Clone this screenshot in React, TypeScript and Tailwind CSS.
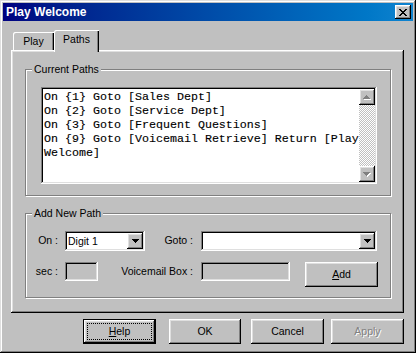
import React from 'react';

const sans = { fontFamily: '"Liberation Sans", Arial, sans-serif' };
const mono = { fontFamily: '"Liberation Mono", "Courier New", monospace' };

// classic 3d bevels
const RAISED =
  'shadow-[inset_-1px_-1px_#000,inset_1px_1px_#fff,inset_-2px_-2px_#808080,inset_2px_2px_#dfdfdf]';
const WINDOW =
  'shadow-[inset_-1px_-1px_#000,inset_1px_1px_#dfdfdf,inset_-2px_-2px_#808080,inset_2px_2px_#fff]';
const SUNKEN =
  'shadow-[inset_-1px_-1px_#fff,inset_1px_1px_#808080,inset_-2px_-2px_#dfdfdf,inset_2px_2px_#000]';
const FOCUSED =
  'shadow-[inset_-1px_-1px_#000,inset_1px_1px_#000,inset_-2px_-2px_#000,inset_2px_2px_#fff,inset_-3px_-3px_#808080,inset_3px_3px_#dfdfdf]';
const ETCHED = 'border border-[#808080] shadow-[1px_1px_#fff,inset_1px_1px_#fff]';
const TAB = 'shadow-[inset_1px_1px_#fff,inset_-1px_0_#000,inset_-2px_0_#808080]';

function CloseGlyph() {
  const rows = ['11000011', '01100110', '00111100', '00011000', '00111100', '01100110', '11000011'];
  return (
    <svg width="8" height="7" viewBox="0 0 8 7" shapeRendering="crispEdges">
      {rows.map((r, y) =>
        r.split('').map((c, x) => (c === '1' ? <rect key={`${x}-${y}`} x={x} y={y} width="1" height="1" fill="#000" /> : null))
      )}
    </svg>
  );
}

function DownArrow({ color = '#000' }: { color?: string }) {
  return (
    <svg width="7" height="4" viewBox="0 0 7 4" shapeRendering="crispEdges">
      <rect x="0" y="0" width="7" height="1" fill={color} />
      <rect x="1" y="1" width="5" height="1" fill={color} />
      <rect x="2" y="2" width="3" height="1" fill={color} />
      <rect x="3" y="3" width="1" height="1" fill={color} />
    </svg>
  );
}

function DisabledArrow({ up }: { up?: boolean }) {
  const tri = (dx: number, dy: number, fill: string) =>
    up ? (
      <g fill={fill}>
        <rect x={3 + dx} y={0 + dy} width="1" height="1" />
        <rect x={2 + dx} y={1 + dy} width="3" height="1" />
        <rect x={1 + dx} y={2 + dy} width="5" height="1" />
        <rect x={0 + dx} y={3 + dy} width="7" height="1" />
      </g>
    ) : (
      <g fill={fill}>
        <rect x={0 + dx} y={0 + dy} width="7" height="1" />
        <rect x={1 + dx} y={1 + dy} width="5" height="1" />
        <rect x={2 + dx} y={2 + dy} width="3" height="1" />
        <rect x={3 + dx} y={3 + dy} width="1" height="1" />
      </g>
    );
  return (
    <svg width="8" height="5" viewBox="0 0 8 5" shapeRendering="crispEdges">
      {tri(1, 1, '#fff')}
      {tri(0, 0, '#808080')}
    </svg>
  );
}

function Combo({ width, value }: { width: string; value?: string }) {
  return (
    <div className={`${width} h-[20px] bg-white ${SUNKEN} p-[2px] flex`}>
      <div className="flex-1 pl-[1px] flex items-center text-black leading-none">{value}</div>
      <div className={`w-[16px] h-[16px] bg-[#c0c0c0] ${RAISED} flex items-center justify-center`}>
        <DownArrow />
      </div>
    </div>
  );
}

function Group({ label, height, className = '', children }: { label: string; height: string; className?: string; children: React.ReactNode }) {
  return (
    <div className={`relative w-[366px] ${height} ${ETCHED} ${className}`}>
      <span className="absolute left-[6px] top-[-7px] px-[2px] bg-[#c0c0c0] leading-[13px] text-black">{label}</span>
      {children}
    </div>
  );
}

function Button({ w, children, focused, disabled, className = '' }: { w: string; children: React.ReactNode; focused?: boolean; disabled?: boolean; className?: string }) {
  return (
    <div
      className={`relative ${w} h-[25px] bg-[#c0c0c0] ${focused ? FOCUSED : RAISED} flex items-center justify-center ${
        disabled ? 'text-[#808080] [text-shadow:1px_1px_0_#fff]' : 'text-black'
      } ${className}`}
    >
      {focused && <div className="absolute inset-[4px] border border-dotted border-black" />}
      <span className="relative">{children}</span>
    </div>
  );
}

const lines = [
  'On {1} Goto [Sales Dept]',
  'On {2} Goto [Service Dept]',
  'On {3} Goto [Frequent Questions]',
  'On {9} Goto [Voicemail Retrieve] Return [Play',
  'Welcome]',
];

export default function App() {
  return (
    <div className={`w-[416px] h-[353px] bg-[#c0c0c0] ${WINDOW} p-[3px] flex flex-col text-[10.5px]`} style={sans}>
      {/* Title bar */}
      <div className="h-[18px] flex items-center justify-between pl-[3px] pr-[2px] bg-linear-to-r from-[#000080] to-[#1084d0]">
        <span className="text-white font-bold text-[12px] leading-none">Play Welcome</span>
        <div className={`w-[16px] h-[14px] bg-[#c0c0c0] ${RAISED} flex items-center justify-center`}>
          <CloseGlyph />
        </div>
      </div>

      <div className="px-[8px]">
        {/* Tabs */}
        <div className="mt-[9px] h-[20px] flex items-end pl-[2px]">
          <div className={`w-[41px] h-[18px] rounded-tl-[2px] ${TAB} flex items-center justify-center pt-[1px] text-black`}>Play</div>
          <div className={`relative z-10 w-[45px] h-[22px] mb-[-2px] bg-[#c0c0c0] rounded-tl-[2px] ${TAB} flex items-center justify-center pb-[2px] text-black`}>
            Paths
          </div>
        </div>

        {/* Tab panel */}
        <div className={`w-[393px] h-[263px] bg-[#c0c0c0] ${RAISED} pt-[19px] pl-[14px]`}>
          <Group label="Current Paths" height="h-[127px]" className="pt-[17px] pl-[15px]">
            <div className={`w-[336px] h-[97px] bg-white ${SUNKEN} p-[2px] flex`}>
              <div
                className="flex-1 pl-[1px] pt-[1px] overflow-hidden whitespace-pre text-[11.67px] leading-[14px] text-black [-webkit-text-stroke:0.12px_#000]"
                style={mono}
              >
                {lines.map((l) => (
                  <div key={l}>{l}</div>
                ))}
              </div>
              <div className="w-[16px] flex flex-col">
                <div className={`w-[16px] h-[16px] bg-[#c0c0c0] ${RAISED} flex items-center justify-center`}>
                  <DisabledArrow up />
                </div>
                <div className="flex-1 bg-[image:repeating-conic-gradient(#c0c0c0_0%_25%,#ffffff_0%_50%)] bg-[length:2px_2px]" />
                <div className={`w-[16px] h-[16px] bg-[#c0c0c0] ${RAISED} flex items-center justify-center`}>
                  <DisabledArrow />
                </div>
              </div>
            </div>
          </Group>

          <Group label="Add New Path" height="h-[85px]" className="mt-[17px] pt-[17px] text-black">
            <div className="flex items-center h-[20px]">
              <div className="w-[32px] text-right">On :</div>
              <div className="ml-[7px]">
                <Combo width="w-[80px]" value="Digit 1" />
              </div>
              <div className="w-[48px] text-right">Goto :</div>
              <div className="ml-[8px]">
                <Combo width="w-[176px]" />
              </div>
            </div>
            <div className="mt-[11px] flex items-start">
              <div className="w-[32px] h-[19px] flex items-center justify-end">sec :</div>
              <div className={`ml-[7px] w-[33px] h-[19px] ${SUNKEN}`} />
              <div className="w-[95px] h-[19px] flex items-center justify-end whitespace-nowrap">Voicemail Box :</div>
              <div className={`ml-[8px] w-[89px] h-[19px] ${SUNKEN}`} />
              <Button w="w-[73px]" className="ml-[15px]">
                <u>A</u>dd
              </Button>
            </div>
          </Group>
        </div>

        {/* Dialog buttons */}
        <div className="mt-[6px] flex">
          <Button w="w-[73px]" focused className="ml-[72px]">
            <u>H</u>elp
          </Button>
          <Button w="w-[72px]" className="ml-[13px]">OK</Button>
          <Button w="w-[73px]" className="ml-[10px]">Cancel</Button>
          <Button w="w-[73px]" disabled className="ml-[7px]">Apply</Button>
        </div>
      </div>
    </div>
  );
}
